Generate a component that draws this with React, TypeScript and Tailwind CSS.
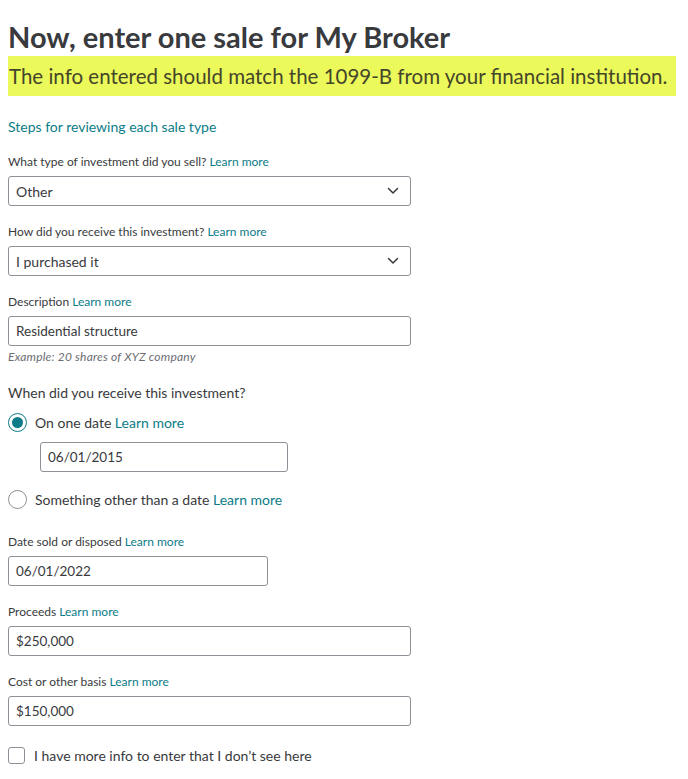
import React from 'react';

const teal = 'text-[#0b7c88]';

function LearnMore() {
  return <span className={teal}>Learn more</span>;
}

function Label({ text }: { text: string }) {
  return (
    <div className="text-[12px] leading-[14px] text-[#393a3d]">
      {text} <LearnMore />
    </div>
  );
}

function Chevron() {
  return (
    <svg width="12" height="8" viewBox="0 0 12 8" fill="none">
      <path d="M1.5 1.5 6 6l4.5-4.5" stroke="#393a3d" strokeWidth="1.5" strokeLinecap="round" strokeLinejoin="round" />
    </svg>
  );
}

function Select({ value }: { value: string }) {
  return (
    <div className="mt-[7px] flex h-[30px] w-[403px] items-center justify-between rounded-[3px] border border-[#8d9096] pl-[7px] pr-[11px] text-[14px] text-[#393a3d]">
      <span>{value}</span>
      <Chevron />
    </div>
  );
}

function Input({ value, className }: { value: string; className: string }) {
  return (
    <div className={`flex h-[30px] items-center rounded-[3px] border border-[#8d9096] pl-[7px] text-[13.5px] text-[#393a3d] ${className}`}>
      {value}
    </div>
  );
}

function Radio({ checked }: { checked: boolean }) {
  return (
    <span
      className={`flex h-[19px] w-[19px] items-center justify-center rounded-full border-[1.5px] ${checked ? 'border-[#0b7c88]' : 'border-[#8d9096]'}`}
    >
      {checked && <span className="h-[11px] w-[11px] rounded-full bg-[#0b7c88]" />}
    </span>
  );
}

export default function App() {
  return (
    <div className="min-h-[779px] w-[688px] bg-white pl-[8px] pt-[20px] font-['Lato',sans-serif] text-[#393a3d]">
      <h1 className="text-[29px] font-bold leading-[34px] text-[#393a3d]">Now, enter one sale for My Broker</h1>
      <div className="mt-[2px] flex h-[40px] w-[668px] items-center bg-[#ecf95a] pl-[1px] text-[20.5px] text-[#44462a]">
        The info entered should match the 1099-B from your financial institution.
      </div>

      <div className={`mt-[21px] text-[14px] leading-[20px] ${teal}`}>Steps for reviewing each sale type</div>

      <div className="mt-[18px]">
        <Label text="What type of investment did you sell?" />
        <Select value="Other" />
      </div>

      <div className="mt-[19px]">
        <Label text="How did you receive this investment?" />
        <Select value="I purchased it" />
      </div>

      <div className="mt-[19px]">
        <Label text="Description" />
        <Input value="Residential structure" className="mt-[7px] w-[403px]" />
        <div className="mt-[3px] text-[12px] italic leading-[16px] tracking-[0.2px] text-[#6b6c72]">Example: 20 shares of XYZ company</div>
      </div>

      <div className="mt-[17px] text-[14px] leading-[21px]">When did you receive this investment?</div>

      <div className="mt-[9px] flex h-[21px] items-center gap-[8px]">
        <Radio checked />
        <span className="text-[14px]">
          On one date <LearnMore />
        </span>
      </div>
      <Input value="06/01/2015" className="ml-[32px] mt-[9px] w-[248px]" />

      <div className="mt-[17px] flex h-[21px] items-center gap-[8px]">
        <Radio checked={false} />
        <span className="text-[14px]">
          Something other than a date <LearnMore />
        </span>
      </div>

      <div className="mt-[25px]">
        <Label text="Date sold or disposed" />
        <Input value="06/01/2022" className="mt-[7px] w-[260px]" />
      </div>

      <div className="mt-[19px]">
        <Label text="Proceeds" />
        <Input value="$250,000" className="mt-[7px] w-[403px]" />
      </div>

      <div className="mt-[19px]">
        <Label text="Cost or other basis" />
        <Input value="$150,000" className="mt-[7px] w-[403px]" />
      </div>

      <div className="mt-[19px] flex h-[21px] items-center gap-[9px]">
        <span className="h-[17px] w-[17px] rounded-[3px] border border-[#8d9096]" />
        <span className="text-[14px]">I have more info to enter that I don’t see here</span>
      </div>
    </div>
  );
}
